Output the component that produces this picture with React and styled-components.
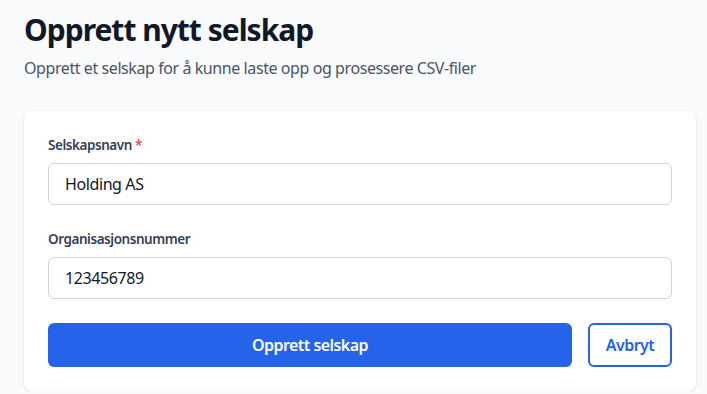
import React from 'react';
import styled, { createGlobalStyle } from 'styled-components';

const GlobalStyle = createGlobalStyle`
  * { box-sizing: border-box; }
  body {
    margin: 0;
    background: #f9fafb;
    font-family: "Noto Sans", "Open Sans", sans-serif;
    color: #111827;
  }
`;

const Page = styled.div`
  padding: 12px 11px 0 24px;
`;

const Title = styled.h1`
  margin: 0;
  font-size: 30px;
  line-height: 36px;
  font-weight: 700;
  letter-spacing: -1px;
  color: #111827;
`;

const Subtitle = styled.p`
  margin: 8px 0 31px;
  font-size: 16px;
  line-height: 24px;
  letter-spacing: -0.42px;
  color: #4b5563;
`;

const Card = styled.form`
  background: #fff;
  border-radius: 8px;
  box-shadow: 0 1px 3px rgba(0, 0, 0, 0.1), 0 1px 2px rgba(0, 0, 0, 0.06);
  padding: 24px;
  display: flex;
  flex-direction: column;
  gap: 24px;
`;

const Field = styled.div`
  display: flex;
  flex-direction: column;
  gap: 8px;
`;

const Label = styled.label`
  font-size: 13.5px;
  line-height: 20px;
  font-weight: 600;
  letter-spacing: -0.45px;
  color: #374151;
`;

const Star = styled.span`
  color: #ef4444;
`;

const Input = styled.input`
  width: 100%;
  height: 42px;
  padding: 8px 16px;
  font: inherit;
  font-size: 16px;
  letter-spacing: -0.4px;
  color: #111827;
  border: 1px solid #d1d5db;
  border-radius: 6px;
  background: #fff;
  outline: none;
`;

const Actions = styled.div`
  display: flex;
  gap: 16px;
`;

const Button = styled.button`
  height: 44px;
  font: inherit;
  font-size: 16px;
  font-weight: 600;
  letter-spacing: -0.55px;
  border-radius: 6px;
  cursor: pointer;
  flex: ${p => (p.$primary ? '1' : '0 0 84px')};
  background: ${p => (p.$primary ? '#2563eb' : '#fff')};
  color: ${p => (p.$primary ? '#fff' : '#2563eb')};
  border: ${p => (p.$primary ? 'none' : '2px solid #2563eb')};
`;

export default function App() {
  return (
    <>
      <GlobalStyle />
      <Page>
        <Title>Opprett nytt selskap</Title>
        <Subtitle>Opprett et selskap for å kunne laste opp og prosessere CSV-filer</Subtitle>
        <Card onSubmit={e => e.preventDefault()}>
          <Field>
            <Label>
              Selskapsnavn <Star>*</Star>
            </Label>
            <Input defaultValue="Holding AS" />
          </Field>
          <Field>
            <Label>Organisasjonsnummer</Label>
            <Input defaultValue="123456789" />
          </Field>
          <Actions>
            <Button type="submit" $primary>Opprett selskap</Button>
            <Button type="button">Avbryt</Button>
          </Actions>
        </Card>
      </Page>
    </>
  );
}
